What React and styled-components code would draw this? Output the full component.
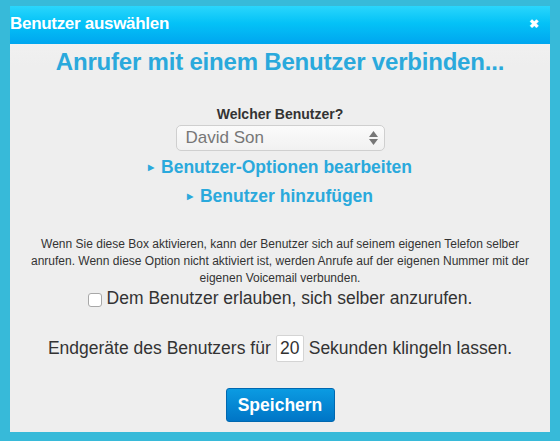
import styled, { createGlobalStyle } from "styled-components";

const GlobalStyle = createGlobalStyle`
  html, body {
    margin: 0;
    padding: 0;
    background: #37bad9;
    font-family: "Liberation Sans", Arial, sans-serif;
  }
`;

const Page = styled.div`
  width: 560px;
  height: 441px;
  padding: 6px 10px 9px 10px;
  box-sizing: border-box;
`;

const Dialog = styled.div`
  width: 540px;
  height: 426px;
  display: flex;
  flex-direction: column;
  background: linear-gradient(#f5f5f5, #eeeeee 60px, #eeeeee);
`;

const Header = styled.div`
  height: 36px;
  display: flex;
  align-items: center;
  justify-content: space-between;
  padding: 0 11px 2px 0;
  background: linear-gradient(#2ad6fc, #04c2f7 45%, #00a6ef);
  color: #fff;
  font-weight: bold;
  font-size: 17px;
  letter-spacing: -0.3px;
`;

const Close = styled.span`
  font-size: 12px;
  line-height: 1;
`;

const Body = styled.div`
  display: flex;
  flex-direction: column;
  align-items: center;
  color: #333;
`;

const Title = styled.h1`
  margin: 4px 0 0;
  font-size: 24px;
  font-weight: bold;
  color: #2aa9dc;
  letter-spacing: -0.2px;
`;

const Label = styled.div`
  margin-top: 30px;
  font-size: 14px;
  font-weight: bold;
`;

const Select = styled.div`
  margin-top: 3px;
  width: 209px;
  height: 26px;
  box-sizing: border-box;
  border: 1px solid #cfcfcf;
  border-radius: 5px;
  background: linear-gradient(#fbfbfb, #f1f1f1);
  display: flex;
  align-items: center;
  justify-content: space-between;
  padding: 0 6px 0 9px;
  font-size: 17px;
  color: #777;
`;

const Arrows = styled.span`
  display: flex;
  flex-direction: column;
  gap: 2px;
`;

const Link = styled.a`
  display: block;
  font-size: 17.5px;
  font-weight: bold;
  color: #2aa9dc;
  margin-top: ${(p) => p.$top}px;
  line-height: 20px;
`;

const Tri = styled.span`
  font-size: 8px;
  margin-right: 7px;
  vertical-align: 3px;
`;

const Note = styled.p`
  margin: 29px 0 0;
  width: 505px;
  font-size: 12px;
  line-height: 17px;
  text-align: center;
`;

const CheckRow = styled.label`
  display: flex;
  align-items: center;
  gap: 5px;
  font-size: 17.5px;
  margin-top: 1px;
`;

const Box = styled.span`
  width: 12px;
  height: 12px;
  border: 1px solid #a8a8a8;
  border-radius: 3px;
  background: #fff;
  margin-top: 3px;
`;

const RingRow = styled.div`
  margin-top: 26px;
  display: flex;
  align-items: center;
  gap: 5px;
  font-size: 17.5px;
`;

const Seconds = styled.span`
  width: 28px;
  height: 27px;
  box-sizing: border-box;
  border: 1px solid #d4d4d4;
  border-radius: 2px;
  background: #fff;
  display: flex;
  align-items: center;
  justify-content: center;
`;

const SaveButton = styled.button`
  margin-top: 26px;
  width: 109px;
  height: 34px;
  border: 1px solid #0068b0;
  border-radius: 3px;
  background: linear-gradient(#0b9be2, #0075c6);
  color: #fff;
  font-family: inherit;
  font-size: 17.5px;
  font-weight: bold;
`;

export default function App() {
  return (
    <Page>
      <GlobalStyle />
      <Dialog>
        <Header>
          <span>Benutzer auswählen</span>
          <Close>✖</Close>
        </Header>
        <Body>
          <Title>Anrufer mit einem Benutzer verbinden...</Title>
          <Label>Welcher Benutzer?</Label>
          <Select>
            <span>David Son</span>
            <Arrows>
              <svg width="9" height="6" viewBox="0 0 9 6">
                <path d="M0 6 L4.5 0 L9 6Z" fill="#777" />
              </svg>
              <svg width="9" height="6" viewBox="0 0 9 6">
                <path d="M0 0 L4.5 6 L9 0Z" fill="#777" />
              </svg>
            </Arrows>
          </Select>
          <Link $top={6}>
            <Tri>▶</Tri>Benutzer-Optionen bearbeiten
          </Link>
          <Link $top={8}>
            <Tri>▶</Tri>Benutzer hinzufügen
          </Link>
          <Note>
            Wenn Sie diese Box aktivieren, kann der Benutzer sich auf seinem eigenen
            Telefon selber anrufen. Wenn diese Option nicht aktiviert ist, werden
            Anrufe auf der eigenen Nummer mit der eigenen Voicemail verbunden.
          </Note>
          <CheckRow>
            <Box />
            Dem Benutzer erlauben, sich selber anzurufen.
          </CheckRow>
          <RingRow>
            Endgeräte des Benutzers für <Seconds>20</Seconds> Sekunden klingeln
            lassen.
          </RingRow>
          <SaveButton>Speichern</SaveButton>
        </Body>
      </Dialog>
    </Page>
  );
}
